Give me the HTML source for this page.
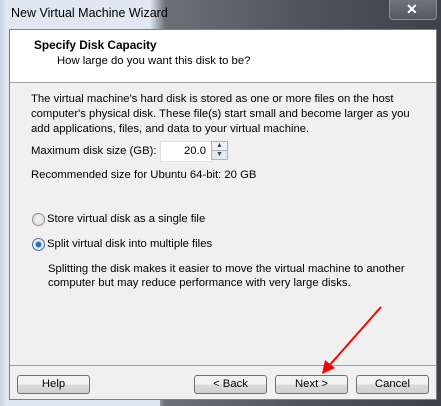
<!DOCTYPE html>
<html><head><style>
body{margin:0;width:441px;height:406px;overflow:hidden;position:relative;font-family:"Liberation Sans",sans-serif;font-size:11.3px;color:#000;background:#3a3f45}
.abs{position:absolute}
.btn{position:absolute;top:375px;width:71px;height:17px;border:1px solid #707070;border-radius:3px;background:linear-gradient(#f2f2f2 50%,#dcdcdc 50%,#d0d0d0);text-align:center;line-height:17px;font-size:11.3px}
.t{position:absolute;white-space:nowrap}
</style></head><body>
<div class="abs" style="left:0;top:0;width:441px;height:406px;background:linear-gradient(90deg,#dfe8f2 0,#dfe8f2 150px,#6b7077 165px,#50555c 300px,#3d4248 441px)"></div>
<div class="abs" style="left:0;top:398px;width:160px;height:8px;background:#dfe8f2"></div>
<div class="abs" style="left:0;top:0;width:8px;height:406px;background:linear-gradient(90deg,#c8d4e2,#e4ecf4)"></div>
<div class="abs" style="left:389px;top:0;width:46px;height:19px;border:1px solid #8a9098;border-top:none;border-radius:0 0 4px 4px;background:linear-gradient(#6f747b,#55595f)"></div>
<div class="t" style="left:406px;top:1px;color:#fff;font-weight:bold;font-size:14px">✕</div>
<div class="t" style="left:11px;top:6px;font-size:12.5px;color:#000">New Virtual Machine Wizard</div>
<div class="abs" style="left:9px;top:29px;width:426px;height:369px;background:#f0f0f0;border:1px solid #7a8088"></div>
<div class="abs" style="left:10px;top:30px;width:426px;height:52px;background:#fff;border-bottom:1px solid #a0a0a0"></div>
<div class="t" style="left:34px;top:38px;font-weight:bold;font-size:11.8px">Specify Disk Capacity</div>
<div class="t" style="left:57px;top:55px">How large do you want this disk to be?</div>
<div class="t" style="left:31px;top:92px;line-height:15px">The virtual machine's hard disk is stored as one or more files on the host<br>computer's physical disk. These file(s) start small and become larger as you<br>add applications, files, and data to your virtual machine.</div>
<div class="t" style="left:31px;top:145px">Maximum disk size (GB):</div>
<div class="abs" style="left:160px;top:141px;width:50px;height:19px;background:#fff;border:1px solid #e2e3ea"></div>
<div class="t" style="left:184px;top:145px">20.0</div>
<div class="abs" style="left:211px;top:141px;width:15px;height:8px;border:1px solid #a9b3c4;background:#eef1f6;font-size:7px;line-height:8px;text-align:center;color:#445">▲</div>
<div class="abs" style="left:211px;top:150px;width:15px;height:8px;border:1px solid #a9b3c4;background:#e4e9f0;font-size:7px;line-height:8px;text-align:center;color:#445">▼</div>
<div class="t" style="left:31px;top:169px">Recommended size for Ubuntu 64-bit: 20 GB</div>
<div class="abs" style="left:32px;top:213px;width:11px;height:11px;border-radius:50%;border:1px solid #8f8f8f;background:radial-gradient(#f4f4f4,#d8d8d8)"></div>
<div class="t" style="left:47px;top:213px">Store virtual disk as a single file</div>
<div class="abs" style="left:32px;top:238px;width:11px;height:11px;border-radius:50%;border:1px solid #4a6e99;background:radial-gradient(circle,#1a5a9e 0,#2c7bc8 2.5px,#e8eef6 3.5px)"></div>
<div class="t" style="left:47px;top:238px">Split virtual disk into multiple files</div>
<div class="t" style="left:48px;top:262px;line-height:14px">Splitting the disk makes it easier to move the virtual machine to another<br>computer but may reduce performance with very large disks.</div>
<div class="abs" style="left:10px;top:365px;width:426px;height:1px;background:#a0a0a0"></div>
<div class="btn" style="left:17px">Help</div>
<div class="btn" style="left:194px">&lt; Back</div>
<div class="btn" style="left:275px">Next &gt;</div>
<div class="btn" style="left:356px">Cancel</div>
<svg class="abs" style="left:0;top:0" width="441" height="406"><line x1="381" y1="307" x2="328" y2="367" stroke="#f00" stroke-width="2"/><polygon points="322,374 325,360 335,368" fill="#f00"/></svg>
</body></html>
